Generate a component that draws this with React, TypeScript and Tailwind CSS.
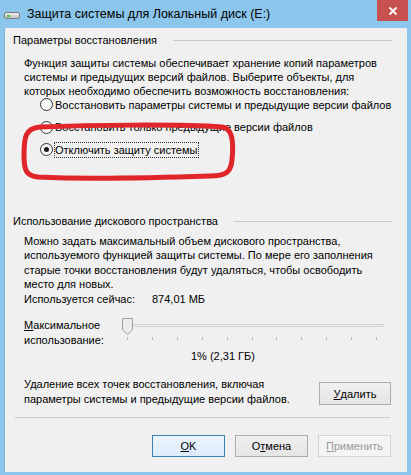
import React from "react"

const ui = { fontFamily: '"Liberation Sans", Arial, sans-serif' }

function Radio({ checked, children }: { checked?: boolean; children: React.ReactNode }) {
  return (
    <div className="h-[13px] flex items-center">
      <span className="w-[13px] h-[13px] rounded-full border border-[#333] bg-gradient-to-b from-[#f4f4f4] to-[#ffffff] flex items-center justify-center shrink-0">
        {checked && <span className="w-[5px] h-[5px] rounded-full bg-[#1a1a1a]" />}
      </span>
      <span
        className={`ml-[2px] leading-[14px] whitespace-nowrap ${
          checked ? "outline-1 outline-dotted outline-[#333] pr-[1px]" : ""
        }`}
      >
        {children}
      </span>
    </div>
  )
}

function Button({
  children,
  primary,
  disabled,
}: {
  children: React.ReactNode
  primary?: boolean
  disabled?: boolean
}) {
  return (
    <div
      className={`w-[73px] h-[22px] flex items-center justify-center border
      ${primary ? "border-[#3c7fb1] bg-gradient-to-b from-[#ecf4fc] to-[#dcecfc]" : ""}
      ${disabled ? "border-[#d4d4d4] bg-[#f4f4f4] text-[#9a9a9a]" : ""}
      ${!primary && !disabled ? "border-[#acacac] bg-gradient-to-b from-[#f0f0f0] to-[#e5e5e5]" : ""}`}
    >
      {children}
    </div>
  )
}

function GroupHeader({ title }: { title: string }) {
  return (
    <div className="h-[15px] flex items-center leading-[15px]">
      <span className="whitespace-nowrap">{title}</span>
      <div className="flex-1 ml-[16px] border-t border-[#c9c9c9]" />
    </div>
  )
}

export default function App() {
  const ticks = Array.from({ length: 11 }, (_, i) => i)

  return (
    <div
      className="w-[411px] h-[475px] bg-[#8cc6ec] flex flex-col text-[11px] text-black relative overflow-hidden"
      style={ui}
    >
      {/* Title bar */}
      <div className="h-[28px] flex items-start shrink-0">
        <div className="mt-[12px] ml-[4px] w-[16px] h-[7px] rounded-[2px] border border-[#7d7d7d] bg-gradient-to-b from-[#f2f2f2] to-[#bdbdbd] relative">
          <span className="absolute left-[2px] top-[2px] w-[3px] h-[2px] bg-[#49c43f]" />
        </div>
        <span className="ml-[7px] mt-[6px] text-[12.5px] leading-[16px] whitespace-nowrap">
          Защита системы для Локальный диск (E:)
        </span>
        <div className="ml-auto mr-[3px] w-[31px] h-[21px] bg-[#c75050] flex items-center justify-center">
          <svg width="10" height="10" viewBox="0 0 10 10">
            <path d="M1.5 1.5 L8.5 8.5 M8.5 1.5 L1.5 8.5" stroke="#fff" strokeWidth="1.8" />
          </svg>
        </div>
      </div>

      {/* Client area */}
      <div className="flex-1 mx-[4px] mb-[3px] bg-[#f0f0f0] border-l border-[#7eb4d9] pl-[8px] pr-[15px] pt-[5px] flex flex-col">
        <GroupHeader title="Параметры восстановления" />

        <p className="ml-[11px] mt-[8px] leading-[14px] whitespace-nowrap">
          Функция защиты системы обеспечивает хранение копий параметров
          <br />
          системы и предыдущих версий файлов. Выберите объекты, для
          <br />
          которых необходимо обеспечить возможность восстановления:
        </p>

        <div className="ml-[27px] flex flex-col gap-[9.5px]">
          <Radio>Восстановить параметры системы и предыдущие версии файлов</Radio>
          <Radio>Восстановить только предыдущие версии файлов</Radio>
          <Radio checked>Отключить защиту системы</Radio>
        </div>

        <div className="mt-[57.5px]">
          <GroupHeader title="Использование дискового пространства" />
        </div>

        <p className="ml-[11px] mt-[5px] leading-[14.6px] whitespace-nowrap">
          Можно задать максимальный объем дискового пространства,
          <br />
          используемого функцией защиты системы. По мере его заполнения
          <br />
          старые точки восстановления будут удаляться, чтобы освободить
          <br />
          место для новых.
        </p>

        <div className="ml-[11px] h-[15px] leading-[15px] flex">
          <span className="w-[128px]">Используется сейчас:</span>
          <span>874,01 МБ</span>
        </div>

        <div className="ml-[11px] mt-[11px] h-[30px] flex">
          <div className="w-[98px] leading-[15px]">
            <u>М</u>аксимальное
            <br />
            использование:
          </div>
          <div className="relative w-[262px] h-[30px]">
            <div className="absolute left-[0px] right-[0px] top-[6px] h-[3px] bg-[#e7eaea] border border-[#d6d6d6]" />
            <svg className="absolute left-0 top-0" width="12" height="18" viewBox="0 0 12 18">
              <path d="M0.5 0.5 H10.5 V12 L5.5 16.5 L0.5 12 Z" fill="#ececec" stroke="#a0a0a0" />
            </svg>
            {ticks.map((i) => (
              <span
                key={i}
                className="absolute top-[19px] w-[1px] h-[3px] bg-[#b4b4b4]"
                style={{ left: 5 + i * 24.9 }}
              />
            ))}
          </div>
        </div>

        <div className="ml-[178px] mt-[1px] h-[15px] leading-[15px]">1% (2,31 ГБ)</div>

        <div className="ml-[11px] mt-[13px] flex">
          <div className="leading-[15px] whitespace-nowrap">
            Удаление всех точек восстановления, включая
            <br />
            параметры системы и предыдущие версии файлов.
          </div>
          <div className="ml-auto mt-[5.5px] mr-[1px] w-[72px] h-[23px] flex items-center justify-center border border-[#acacac] bg-gradient-to-b from-[#f0f0f0] to-[#e5e5e5]">
            <u>У</u>далить
          </div>
        </div>

        <div className="ml-[2px] mr-[2px] mt-[10px] border-t border-[#c9c9c9]" />

        <div className="mt-[17px] flex justify-end gap-[10px] mr-[1px]">
          <Button primary>
            <u>O</u>K
          </Button>
          <Button>
            О<u>т</u>мена
          </Button>
          <Button disabled>
            <u>П</u>рименить
          </Button>
        </div>
      </div>

      {/* Red marker highlight */}
      <svg className="absolute left-0 top-0 pointer-events-none" width="411" height="475">
        <path
          d="M40 127 C 90 125, 180 124, 222 127 C 232 128, 234 140, 232 160 C 231 172, 226 176, 210 176 C 150 178, 80 179, 38 177 C 26 176, 24 170, 24 155 C 24 138, 25 128, 40 127 Z"
          fill="none"
          stroke="#e0262b"
          strokeWidth="5"
        />
      </svg>
    </div>
  )
}
